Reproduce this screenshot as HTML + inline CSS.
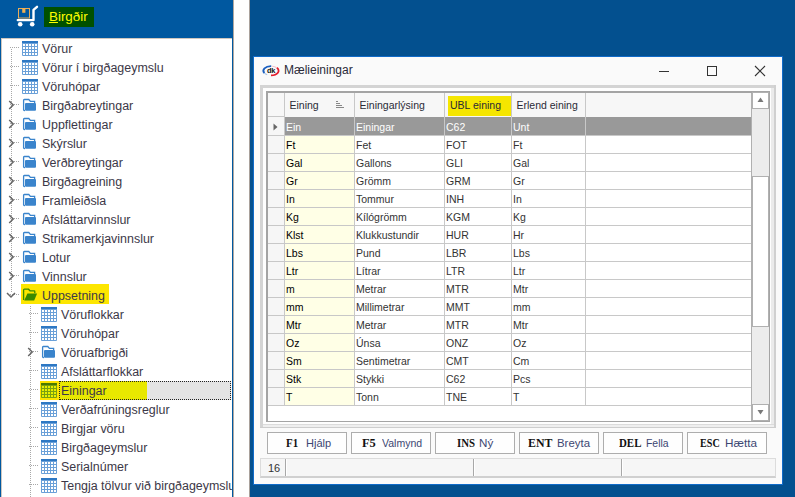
<!DOCTYPE html>
<html><head><meta charset="utf-8"><style>
*{margin:0;padding:0;box-sizing:border-box}
html,body{width:795px;height:497px;overflow:hidden;background:#03508f;font-family:"Liberation Sans",sans-serif;position:relative}
.a{position:absolute}
.t{position:absolute;white-space:nowrap}
.dv{position:absolute;width:1px;background:repeating-linear-gradient(to bottom,#a8a8a8 0 1px,transparent 1px 2px)}
.dh{position:absolute;height:1px;background:repeating-linear-gradient(to right,#a8a8a8 0 1px,transparent 1px 2px)}
</style></head><body>
<div class="a" style="left:0;top:0;width:234px;height:497px;background:#0058a0"></div>
<svg class="a" style="left:0;top:0" width="44" height="32" viewBox="0 0 44 32">
<rect x="18.5" y="8.5" width="11" height="9.5" fill="none" stroke="#e8ac58" stroke-width="1"/>
<rect x="22.2" y="8.2" width="3.2" height="4.6" fill="#f0b050"/>
<path d="M17.8 20.1 H33.5 V9.8 L37 6.8" fill="none" stroke="#fff" stroke-width="2.4" stroke-linejoin="round" stroke-linecap="round"/>
<circle cx="20.2" cy="24.2" r="2.3" fill="#fff"/>
<circle cx="32.2" cy="24.2" r="2.3" fill="#fff"/>
</svg>
<div class="a" style="left:44px;top:7px;width:50px;height:20px;background:#005000"></div>
<div class="t" style="left:49px;top:7px;height:20px;line-height:20px;font-size:13.4px;color:#ffff00"><u style="text-underline-offset:1px">B</u>irgðir</div>
<div class="a" style="left:1px;top:38px;width:231px;height:459px;background:#fff;border-left:1px solid #cfc7bf;border-top:1px solid #cfc7bf"></div>
<div class="a" style="left:233px;top:0;width:17px;height:497px;background:#fefefe;border-left:1px solid #b0a8a0;border-right:1px solid #a8a09a"></div>
<div class="a" style="left:0;top:0;width:232px;height:497px;overflow:hidden">
<div class="dv" style="left:11px;top:49px;height:243px"></div>
<div class="dv" style="left:30px;top:306px;height:191px"></div>
<div class="dh" style="left:10px;top:47px;width:10px"></div>
<svg class="a" style="left:22px;top:41px" width="16" height="15" viewBox="0 0 16 15"><rect x="0" y="0" width="16" height="15" rx="1" fill="#6aa0d8"/><rect x="0" y="0" width="16" height="2" fill="#2d78c4"/><rect x="1" y="3" width="2" height="2" fill="#ffffff"/><rect x="1" y="6" width="2" height="2" fill="#ffffff"/><rect x="1" y="9" width="2" height="2" fill="#ffffff"/><rect x="1" y="12" width="2" height="2" fill="#ffffff"/><rect x="4" y="3" width="2" height="2" fill="#ffffff"/><rect x="4" y="6" width="2" height="2" fill="#ffffff"/><rect x="4" y="9" width="2" height="2" fill="#ffffff"/><rect x="4" y="12" width="2" height="2" fill="#ffffff"/><rect x="7" y="3" width="2" height="2" fill="#ffffff"/><rect x="7" y="6" width="2" height="2" fill="#ffffff"/><rect x="7" y="9" width="2" height="2" fill="#ffffff"/><rect x="7" y="12" width="2" height="2" fill="#ffffff"/><rect x="10" y="3" width="2" height="2" fill="#ffffff"/><rect x="10" y="6" width="2" height="2" fill="#ffffff"/><rect x="10" y="9" width="2" height="2" fill="#ffffff"/><rect x="10" y="12" width="2" height="2" fill="#ffffff"/><rect x="13" y="3" width="2" height="2" fill="#ffffff"/><rect x="13" y="6" width="2" height="2" fill="#ffffff"/><rect x="13" y="9" width="2" height="2" fill="#ffffff"/><rect x="13" y="12" width="2" height="2" fill="#ffffff"/></svg>
<div class="t" style="left:42px;top:38px;height:19px;line-height:22px;font-size:12.45px;color:#3c3848">Vörur</div>
<div class="dh" style="left:10px;top:66px;width:10px"></div>
<svg class="a" style="left:22px;top:60px" width="16" height="15" viewBox="0 0 16 15"><rect x="0" y="0" width="16" height="15" rx="1" fill="#6aa0d8"/><rect x="0" y="0" width="16" height="2" fill="#2d78c4"/><rect x="1" y="3" width="2" height="2" fill="#ffffff"/><rect x="1" y="6" width="2" height="2" fill="#ffffff"/><rect x="1" y="9" width="2" height="2" fill="#ffffff"/><rect x="1" y="12" width="2" height="2" fill="#ffffff"/><rect x="4" y="3" width="2" height="2" fill="#ffffff"/><rect x="4" y="6" width="2" height="2" fill="#ffffff"/><rect x="4" y="9" width="2" height="2" fill="#ffffff"/><rect x="4" y="12" width="2" height="2" fill="#ffffff"/><rect x="7" y="3" width="2" height="2" fill="#ffffff"/><rect x="7" y="6" width="2" height="2" fill="#ffffff"/><rect x="7" y="9" width="2" height="2" fill="#ffffff"/><rect x="7" y="12" width="2" height="2" fill="#ffffff"/><rect x="10" y="3" width="2" height="2" fill="#ffffff"/><rect x="10" y="6" width="2" height="2" fill="#ffffff"/><rect x="10" y="9" width="2" height="2" fill="#ffffff"/><rect x="10" y="12" width="2" height="2" fill="#ffffff"/><rect x="13" y="3" width="2" height="2" fill="#ffffff"/><rect x="13" y="6" width="2" height="2" fill="#ffffff"/><rect x="13" y="9" width="2" height="2" fill="#ffffff"/><rect x="13" y="12" width="2" height="2" fill="#ffffff"/></svg>
<div class="t" style="left:42px;top:57px;height:19px;line-height:22px;font-size:12.45px;color:#3c3848">Vörur í birgðageymslu</div>
<div class="dh" style="left:10px;top:85px;width:10px"></div>
<svg class="a" style="left:22px;top:79px" width="16" height="15" viewBox="0 0 16 15"><rect x="0" y="0" width="16" height="15" rx="1" fill="#6aa0d8"/><rect x="0" y="0" width="16" height="2" fill="#2d78c4"/><rect x="1" y="3" width="2" height="2" fill="#ffffff"/><rect x="1" y="6" width="2" height="2" fill="#ffffff"/><rect x="1" y="9" width="2" height="2" fill="#ffffff"/><rect x="1" y="12" width="2" height="2" fill="#ffffff"/><rect x="4" y="3" width="2" height="2" fill="#ffffff"/><rect x="4" y="6" width="2" height="2" fill="#ffffff"/><rect x="4" y="9" width="2" height="2" fill="#ffffff"/><rect x="4" y="12" width="2" height="2" fill="#ffffff"/><rect x="7" y="3" width="2" height="2" fill="#ffffff"/><rect x="7" y="6" width="2" height="2" fill="#ffffff"/><rect x="7" y="9" width="2" height="2" fill="#ffffff"/><rect x="7" y="12" width="2" height="2" fill="#ffffff"/><rect x="10" y="3" width="2" height="2" fill="#ffffff"/><rect x="10" y="6" width="2" height="2" fill="#ffffff"/><rect x="10" y="9" width="2" height="2" fill="#ffffff"/><rect x="10" y="12" width="2" height="2" fill="#ffffff"/><rect x="13" y="3" width="2" height="2" fill="#ffffff"/><rect x="13" y="6" width="2" height="2" fill="#ffffff"/><rect x="13" y="9" width="2" height="2" fill="#ffffff"/><rect x="13" y="12" width="2" height="2" fill="#ffffff"/></svg>
<div class="t" style="left:42px;top:76px;height:19px;line-height:22px;font-size:12.45px;color:#3c3848">Vöruhópar</div>
<div class="dh" style="left:10px;top:104px;width:10px"></div>
<svg class="a" style="left:22px;top:98px" width="16" height="14" viewBox="0 0 16 14"><path d="M1.6 12 V2.2 Q1.6 1.5 2.3 1.5 H6.8 L8.4 3.4 H12.6 V5.5" fill="none" stroke="#3a84cc" stroke-width="1.3"/><rect x="3" y="5" width="11" height="7.7" rx="1" fill="#3a84cc"/><path d="M1.6 11.5 Q1.6 12.7 3 12.7" fill="none" stroke="#3a84cc" stroke-width="1.3"/></svg>
<svg class="a" style="left:8px;top:100px" width="7" height="10" viewBox="0 0 7 10"><path d="M1.2 1 L5.2 5 L1.2 9" fill="none" stroke="#666" stroke-width="1.5"/></svg>
<div class="t" style="left:42px;top:95px;height:19px;line-height:22px;font-size:12.45px;color:#3c3848">Birgðabreytingar</div>
<div class="dh" style="left:10px;top:123px;width:10px"></div>
<svg class="a" style="left:22px;top:117px" width="16" height="14" viewBox="0 0 16 14"><path d="M1.6 12 V2.2 Q1.6 1.5 2.3 1.5 H6.8 L8.4 3.4 H12.6 V5.5" fill="none" stroke="#3a84cc" stroke-width="1.3"/><rect x="3" y="5" width="11" height="7.7" rx="1" fill="#3a84cc"/><path d="M1.6 11.5 Q1.6 12.7 3 12.7" fill="none" stroke="#3a84cc" stroke-width="1.3"/></svg>
<svg class="a" style="left:8px;top:119px" width="7" height="10" viewBox="0 0 7 10"><path d="M1.2 1 L5.2 5 L1.2 9" fill="none" stroke="#666" stroke-width="1.5"/></svg>
<div class="t" style="left:42px;top:114px;height:19px;line-height:22px;font-size:12.45px;color:#3c3848">Uppflettingar</div>
<div class="dh" style="left:10px;top:142px;width:10px"></div>
<svg class="a" style="left:22px;top:136px" width="16" height="14" viewBox="0 0 16 14"><path d="M1.6 12 V2.2 Q1.6 1.5 2.3 1.5 H6.8 L8.4 3.4 H12.6 V5.5" fill="none" stroke="#3a84cc" stroke-width="1.3"/><rect x="3" y="5" width="11" height="7.7" rx="1" fill="#3a84cc"/><path d="M1.6 11.5 Q1.6 12.7 3 12.7" fill="none" stroke="#3a84cc" stroke-width="1.3"/></svg>
<svg class="a" style="left:8px;top:138px" width="7" height="10" viewBox="0 0 7 10"><path d="M1.2 1 L5.2 5 L1.2 9" fill="none" stroke="#666" stroke-width="1.5"/></svg>
<div class="t" style="left:42px;top:133px;height:19px;line-height:22px;font-size:12.45px;color:#3c3848">Skýrslur</div>
<div class="dh" style="left:10px;top:161px;width:10px"></div>
<svg class="a" style="left:22px;top:155px" width="16" height="14" viewBox="0 0 16 14"><path d="M1.6 12 V2.2 Q1.6 1.5 2.3 1.5 H6.8 L8.4 3.4 H12.6 V5.5" fill="none" stroke="#3a84cc" stroke-width="1.3"/><rect x="3" y="5" width="11" height="7.7" rx="1" fill="#3a84cc"/><path d="M1.6 11.5 Q1.6 12.7 3 12.7" fill="none" stroke="#3a84cc" stroke-width="1.3"/></svg>
<svg class="a" style="left:8px;top:157px" width="7" height="10" viewBox="0 0 7 10"><path d="M1.2 1 L5.2 5 L1.2 9" fill="none" stroke="#666" stroke-width="1.5"/></svg>
<div class="t" style="left:42px;top:152px;height:19px;line-height:22px;font-size:12.45px;color:#3c3848">Verðbreytingar</div>
<div class="dh" style="left:10px;top:180px;width:10px"></div>
<svg class="a" style="left:22px;top:174px" width="16" height="14" viewBox="0 0 16 14"><path d="M1.6 12 V2.2 Q1.6 1.5 2.3 1.5 H6.8 L8.4 3.4 H12.6 V5.5" fill="none" stroke="#3a84cc" stroke-width="1.3"/><rect x="3" y="5" width="11" height="7.7" rx="1" fill="#3a84cc"/><path d="M1.6 11.5 Q1.6 12.7 3 12.7" fill="none" stroke="#3a84cc" stroke-width="1.3"/></svg>
<svg class="a" style="left:8px;top:176px" width="7" height="10" viewBox="0 0 7 10"><path d="M1.2 1 L5.2 5 L1.2 9" fill="none" stroke="#666" stroke-width="1.5"/></svg>
<div class="t" style="left:42px;top:171px;height:19px;line-height:22px;font-size:12.45px;color:#3c3848">Birgðagreining</div>
<div class="dh" style="left:10px;top:199px;width:10px"></div>
<svg class="a" style="left:22px;top:193px" width="16" height="14" viewBox="0 0 16 14"><path d="M1.6 12 V2.2 Q1.6 1.5 2.3 1.5 H6.8 L8.4 3.4 H12.6 V5.5" fill="none" stroke="#3a84cc" stroke-width="1.3"/><rect x="3" y="5" width="11" height="7.7" rx="1" fill="#3a84cc"/><path d="M1.6 11.5 Q1.6 12.7 3 12.7" fill="none" stroke="#3a84cc" stroke-width="1.3"/></svg>
<svg class="a" style="left:8px;top:195px" width="7" height="10" viewBox="0 0 7 10"><path d="M1.2 1 L5.2 5 L1.2 9" fill="none" stroke="#666" stroke-width="1.5"/></svg>
<div class="t" style="left:42px;top:190px;height:19px;line-height:22px;font-size:12.45px;color:#3c3848">Framleiðsla</div>
<div class="dh" style="left:10px;top:218px;width:10px"></div>
<svg class="a" style="left:22px;top:212px" width="16" height="14" viewBox="0 0 16 14"><path d="M1.6 12 V2.2 Q1.6 1.5 2.3 1.5 H6.8 L8.4 3.4 H12.6 V5.5" fill="none" stroke="#3a84cc" stroke-width="1.3"/><rect x="3" y="5" width="11" height="7.7" rx="1" fill="#3a84cc"/><path d="M1.6 11.5 Q1.6 12.7 3 12.7" fill="none" stroke="#3a84cc" stroke-width="1.3"/></svg>
<svg class="a" style="left:8px;top:214px" width="7" height="10" viewBox="0 0 7 10"><path d="M1.2 1 L5.2 5 L1.2 9" fill="none" stroke="#666" stroke-width="1.5"/></svg>
<div class="t" style="left:42px;top:209px;height:19px;line-height:22px;font-size:12.45px;color:#3c3848">Afsláttarvinnslur</div>
<div class="dh" style="left:10px;top:237px;width:10px"></div>
<svg class="a" style="left:22px;top:231px" width="16" height="14" viewBox="0 0 16 14"><path d="M1.6 12 V2.2 Q1.6 1.5 2.3 1.5 H6.8 L8.4 3.4 H12.6 V5.5" fill="none" stroke="#3a84cc" stroke-width="1.3"/><rect x="3" y="5" width="11" height="7.7" rx="1" fill="#3a84cc"/><path d="M1.6 11.5 Q1.6 12.7 3 12.7" fill="none" stroke="#3a84cc" stroke-width="1.3"/></svg>
<svg class="a" style="left:8px;top:233px" width="7" height="10" viewBox="0 0 7 10"><path d="M1.2 1 L5.2 5 L1.2 9" fill="none" stroke="#666" stroke-width="1.5"/></svg>
<div class="t" style="left:42px;top:228px;height:19px;line-height:22px;font-size:12.45px;color:#3c3848">Strikamerkjavinnslur</div>
<div class="dh" style="left:10px;top:256px;width:10px"></div>
<svg class="a" style="left:22px;top:250px" width="16" height="14" viewBox="0 0 16 14"><path d="M1.6 12 V2.2 Q1.6 1.5 2.3 1.5 H6.8 L8.4 3.4 H12.6 V5.5" fill="none" stroke="#3a84cc" stroke-width="1.3"/><rect x="3" y="5" width="11" height="7.7" rx="1" fill="#3a84cc"/><path d="M1.6 11.5 Q1.6 12.7 3 12.7" fill="none" stroke="#3a84cc" stroke-width="1.3"/></svg>
<svg class="a" style="left:8px;top:252px" width="7" height="10" viewBox="0 0 7 10"><path d="M1.2 1 L5.2 5 L1.2 9" fill="none" stroke="#666" stroke-width="1.5"/></svg>
<div class="t" style="left:42px;top:247px;height:19px;line-height:22px;font-size:12.45px;color:#3c3848">Lotur</div>
<div class="dh" style="left:10px;top:275px;width:10px"></div>
<svg class="a" style="left:22px;top:269px" width="16" height="14" viewBox="0 0 16 14"><path d="M1.6 12 V2.2 Q1.6 1.5 2.3 1.5 H6.8 L8.4 3.4 H12.6 V5.5" fill="none" stroke="#3a84cc" stroke-width="1.3"/><rect x="3" y="5" width="11" height="7.7" rx="1" fill="#3a84cc"/><path d="M1.6 11.5 Q1.6 12.7 3 12.7" fill="none" stroke="#3a84cc" stroke-width="1.3"/></svg>
<svg class="a" style="left:8px;top:271px" width="7" height="10" viewBox="0 0 7 10"><path d="M1.2 1 L5.2 5 L1.2 9" fill="none" stroke="#666" stroke-width="1.5"/></svg>
<div class="t" style="left:42px;top:266px;height:19px;line-height:22px;font-size:12.45px;color:#3c3848">Vinnslur</div>
<div class="a" style="left:21px;top:284px;width:88px;height:20px;background:#fde600"></div>
<div class="dh" style="left:10px;top:294px;width:10px"></div>
<svg class="a" style="left:22px;top:288px" width="16" height="14" viewBox="0 0 16 14"><path d="M1.6 12 V2 Q1.6 1.2 2.4 1.2 H6.5 L8 2.8 H12.2 Q12.8 2.8 12.8 3.4 V5.2" fill="none" stroke="#3a8a00" stroke-width="1.3"/><path d="M5.4 5.5 H15.1 L12.2 12.4 H2.2 Z" fill="#3a8a00"/></svg>
<svg class="a" style="left:6px;top:292px" width="10" height="7" viewBox="0 0 10 7"><path d="M1 1 L5 5 L9 1" fill="none" stroke="#666" stroke-width="1.5"/></svg>
<div class="t" style="left:42px;top:285px;height:19px;line-height:22px;font-size:12.45px;color:#3c3848">Uppsetning</div>
<div class="dh" style="left:29px;top:313px;width:10px"></div>
<svg class="a" style="left:41px;top:307px" width="16" height="15" viewBox="0 0 16 15"><rect x="0" y="0" width="16" height="15" rx="1" fill="#6aa0d8"/><rect x="0" y="0" width="16" height="2" fill="#2d78c4"/><rect x="1" y="3" width="2" height="2" fill="#ffffff"/><rect x="1" y="6" width="2" height="2" fill="#ffffff"/><rect x="1" y="9" width="2" height="2" fill="#ffffff"/><rect x="1" y="12" width="2" height="2" fill="#ffffff"/><rect x="4" y="3" width="2" height="2" fill="#ffffff"/><rect x="4" y="6" width="2" height="2" fill="#ffffff"/><rect x="4" y="9" width="2" height="2" fill="#ffffff"/><rect x="4" y="12" width="2" height="2" fill="#ffffff"/><rect x="7" y="3" width="2" height="2" fill="#ffffff"/><rect x="7" y="6" width="2" height="2" fill="#ffffff"/><rect x="7" y="9" width="2" height="2" fill="#ffffff"/><rect x="7" y="12" width="2" height="2" fill="#ffffff"/><rect x="10" y="3" width="2" height="2" fill="#ffffff"/><rect x="10" y="6" width="2" height="2" fill="#ffffff"/><rect x="10" y="9" width="2" height="2" fill="#ffffff"/><rect x="10" y="12" width="2" height="2" fill="#ffffff"/><rect x="13" y="3" width="2" height="2" fill="#ffffff"/><rect x="13" y="6" width="2" height="2" fill="#ffffff"/><rect x="13" y="9" width="2" height="2" fill="#ffffff"/><rect x="13" y="12" width="2" height="2" fill="#ffffff"/></svg>
<div class="t" style="left:61px;top:304px;height:19px;line-height:22px;font-size:12.45px;color:#3c3848">Vöruflokkar</div>
<div class="dh" style="left:29px;top:332px;width:10px"></div>
<svg class="a" style="left:41px;top:326px" width="16" height="15" viewBox="0 0 16 15"><rect x="0" y="0" width="16" height="15" rx="1" fill="#6aa0d8"/><rect x="0" y="0" width="16" height="2" fill="#2d78c4"/><rect x="1" y="3" width="2" height="2" fill="#ffffff"/><rect x="1" y="6" width="2" height="2" fill="#ffffff"/><rect x="1" y="9" width="2" height="2" fill="#ffffff"/><rect x="1" y="12" width="2" height="2" fill="#ffffff"/><rect x="4" y="3" width="2" height="2" fill="#ffffff"/><rect x="4" y="6" width="2" height="2" fill="#ffffff"/><rect x="4" y="9" width="2" height="2" fill="#ffffff"/><rect x="4" y="12" width="2" height="2" fill="#ffffff"/><rect x="7" y="3" width="2" height="2" fill="#ffffff"/><rect x="7" y="6" width="2" height="2" fill="#ffffff"/><rect x="7" y="9" width="2" height="2" fill="#ffffff"/><rect x="7" y="12" width="2" height="2" fill="#ffffff"/><rect x="10" y="3" width="2" height="2" fill="#ffffff"/><rect x="10" y="6" width="2" height="2" fill="#ffffff"/><rect x="10" y="9" width="2" height="2" fill="#ffffff"/><rect x="10" y="12" width="2" height="2" fill="#ffffff"/><rect x="13" y="3" width="2" height="2" fill="#ffffff"/><rect x="13" y="6" width="2" height="2" fill="#ffffff"/><rect x="13" y="9" width="2" height="2" fill="#ffffff"/><rect x="13" y="12" width="2" height="2" fill="#ffffff"/></svg>
<div class="t" style="left:61px;top:323px;height:19px;line-height:22px;font-size:12.45px;color:#3c3848">Vöruhópar</div>
<div class="dh" style="left:29px;top:351px;width:10px"></div>
<svg class="a" style="left:41px;top:345px" width="16" height="14" viewBox="0 0 16 14"><path d="M1.6 12 V2.2 Q1.6 1.5 2.3 1.5 H6.8 L8.4 3.4 H12.6 V5.5" fill="none" stroke="#3a84cc" stroke-width="1.3"/><rect x="3" y="5" width="11" height="7.7" rx="1" fill="#3a84cc"/><path d="M1.6 11.5 Q1.6 12.7 3 12.7" fill="none" stroke="#3a84cc" stroke-width="1.3"/></svg>
<svg class="a" style="left:27px;top:347px" width="7" height="10" viewBox="0 0 7 10"><path d="M1.2 1 L5.2 5 L1.2 9" fill="none" stroke="#666" stroke-width="1.5"/></svg>
<div class="t" style="left:61px;top:342px;height:19px;line-height:22px;font-size:12.45px;color:#3c3848">Vöruafbrigði</div>
<div class="dh" style="left:29px;top:370px;width:10px"></div>
<svg class="a" style="left:41px;top:364px" width="16" height="15" viewBox="0 0 16 15"><rect x="0" y="0" width="16" height="15" rx="1" fill="#6aa0d8"/><rect x="0" y="0" width="16" height="2" fill="#2d78c4"/><rect x="1" y="3" width="2" height="2" fill="#ffffff"/><rect x="1" y="6" width="2" height="2" fill="#ffffff"/><rect x="1" y="9" width="2" height="2" fill="#ffffff"/><rect x="1" y="12" width="2" height="2" fill="#ffffff"/><rect x="4" y="3" width="2" height="2" fill="#ffffff"/><rect x="4" y="6" width="2" height="2" fill="#ffffff"/><rect x="4" y="9" width="2" height="2" fill="#ffffff"/><rect x="4" y="12" width="2" height="2" fill="#ffffff"/><rect x="7" y="3" width="2" height="2" fill="#ffffff"/><rect x="7" y="6" width="2" height="2" fill="#ffffff"/><rect x="7" y="9" width="2" height="2" fill="#ffffff"/><rect x="7" y="12" width="2" height="2" fill="#ffffff"/><rect x="10" y="3" width="2" height="2" fill="#ffffff"/><rect x="10" y="6" width="2" height="2" fill="#ffffff"/><rect x="10" y="9" width="2" height="2" fill="#ffffff"/><rect x="10" y="12" width="2" height="2" fill="#ffffff"/><rect x="13" y="3" width="2" height="2" fill="#ffffff"/><rect x="13" y="6" width="2" height="2" fill="#ffffff"/><rect x="13" y="9" width="2" height="2" fill="#ffffff"/><rect x="13" y="12" width="2" height="2" fill="#ffffff"/></svg>
<div class="t" style="left:61px;top:361px;height:19px;line-height:22px;font-size:12.45px;color:#3c3848">Afsláttarflokkar</div>
<div class="a" style="left:59px;top:381px;width:172px;height:19px;background:#e4e4e4"></div>
<div class="a" style="left:40px;top:381px;width:107px;height:19px;background:#e8e800"></div>
<div class="a" style="left:40px;top:381px;width:19px;height:19px;background:#fee400"></div>
<div class="a" style="left:59px;top:381px;width:172px;height:19px;border:1px dotted #222"></div>
<div class="dh" style="left:29px;top:389px;width:10px"></div>
<svg class="a" style="left:41px;top:383px" width="16" height="15" viewBox="0 0 16 15"><rect x="0" y="0" width="16" height="15" rx="1" fill="#7aa010"/><rect x="0" y="0" width="16" height="2" fill="#4a7a00"/><rect x="1" y="3" width="2" height="2" fill="#e8f000"/><rect x="1" y="6" width="2" height="2" fill="#e8f000"/><rect x="1" y="9" width="2" height="2" fill="#e8f000"/><rect x="1" y="12" width="2" height="2" fill="#e8f000"/><rect x="4" y="3" width="2" height="2" fill="#e8f000"/><rect x="4" y="6" width="2" height="2" fill="#e8f000"/><rect x="4" y="9" width="2" height="2" fill="#e8f000"/><rect x="4" y="12" width="2" height="2" fill="#e8f000"/><rect x="7" y="3" width="2" height="2" fill="#e8f000"/><rect x="7" y="6" width="2" height="2" fill="#e8f000"/><rect x="7" y="9" width="2" height="2" fill="#e8f000"/><rect x="7" y="12" width="2" height="2" fill="#e8f000"/><rect x="10" y="3" width="2" height="2" fill="#e8f000"/><rect x="10" y="6" width="2" height="2" fill="#e8f000"/><rect x="10" y="9" width="2" height="2" fill="#e8f000"/><rect x="10" y="12" width="2" height="2" fill="#e8f000"/><rect x="13" y="3" width="2" height="2" fill="#e8f000"/><rect x="13" y="6" width="2" height="2" fill="#e8f000"/><rect x="13" y="9" width="2" height="2" fill="#e8f000"/><rect x="13" y="12" width="2" height="2" fill="#e8f000"/></svg>
<div class="t" style="left:61px;top:380px;height:19px;line-height:22px;font-size:12.45px;color:#3c3848">Einingar</div>
<div class="dh" style="left:29px;top:408px;width:10px"></div>
<svg class="a" style="left:41px;top:402px" width="16" height="15" viewBox="0 0 16 15"><rect x="0" y="0" width="16" height="15" rx="1" fill="#6aa0d8"/><rect x="0" y="0" width="16" height="2" fill="#2d78c4"/><rect x="1" y="3" width="2" height="2" fill="#ffffff"/><rect x="1" y="6" width="2" height="2" fill="#ffffff"/><rect x="1" y="9" width="2" height="2" fill="#ffffff"/><rect x="1" y="12" width="2" height="2" fill="#ffffff"/><rect x="4" y="3" width="2" height="2" fill="#ffffff"/><rect x="4" y="6" width="2" height="2" fill="#ffffff"/><rect x="4" y="9" width="2" height="2" fill="#ffffff"/><rect x="4" y="12" width="2" height="2" fill="#ffffff"/><rect x="7" y="3" width="2" height="2" fill="#ffffff"/><rect x="7" y="6" width="2" height="2" fill="#ffffff"/><rect x="7" y="9" width="2" height="2" fill="#ffffff"/><rect x="7" y="12" width="2" height="2" fill="#ffffff"/><rect x="10" y="3" width="2" height="2" fill="#ffffff"/><rect x="10" y="6" width="2" height="2" fill="#ffffff"/><rect x="10" y="9" width="2" height="2" fill="#ffffff"/><rect x="10" y="12" width="2" height="2" fill="#ffffff"/><rect x="13" y="3" width="2" height="2" fill="#ffffff"/><rect x="13" y="6" width="2" height="2" fill="#ffffff"/><rect x="13" y="9" width="2" height="2" fill="#ffffff"/><rect x="13" y="12" width="2" height="2" fill="#ffffff"/></svg>
<div class="t" style="left:61px;top:399px;height:19px;line-height:22px;font-size:12.45px;color:#3c3848">Verðafrúningsreglur</div>
<div class="dh" style="left:29px;top:427px;width:10px"></div>
<svg class="a" style="left:41px;top:421px" width="16" height="15" viewBox="0 0 16 15"><rect x="0" y="0" width="16" height="15" rx="1" fill="#6aa0d8"/><rect x="0" y="0" width="16" height="2" fill="#2d78c4"/><rect x="1" y="3" width="2" height="2" fill="#ffffff"/><rect x="1" y="6" width="2" height="2" fill="#ffffff"/><rect x="1" y="9" width="2" height="2" fill="#ffffff"/><rect x="1" y="12" width="2" height="2" fill="#ffffff"/><rect x="4" y="3" width="2" height="2" fill="#ffffff"/><rect x="4" y="6" width="2" height="2" fill="#ffffff"/><rect x="4" y="9" width="2" height="2" fill="#ffffff"/><rect x="4" y="12" width="2" height="2" fill="#ffffff"/><rect x="7" y="3" width="2" height="2" fill="#ffffff"/><rect x="7" y="6" width="2" height="2" fill="#ffffff"/><rect x="7" y="9" width="2" height="2" fill="#ffffff"/><rect x="7" y="12" width="2" height="2" fill="#ffffff"/><rect x="10" y="3" width="2" height="2" fill="#ffffff"/><rect x="10" y="6" width="2" height="2" fill="#ffffff"/><rect x="10" y="9" width="2" height="2" fill="#ffffff"/><rect x="10" y="12" width="2" height="2" fill="#ffffff"/><rect x="13" y="3" width="2" height="2" fill="#ffffff"/><rect x="13" y="6" width="2" height="2" fill="#ffffff"/><rect x="13" y="9" width="2" height="2" fill="#ffffff"/><rect x="13" y="12" width="2" height="2" fill="#ffffff"/></svg>
<div class="t" style="left:61px;top:418px;height:19px;line-height:22px;font-size:12.45px;color:#3c3848">Birgjar vöru</div>
<div class="dh" style="left:29px;top:446px;width:10px"></div>
<svg class="a" style="left:41px;top:440px" width="16" height="15" viewBox="0 0 16 15"><rect x="0" y="0" width="16" height="15" rx="1" fill="#6aa0d8"/><rect x="0" y="0" width="16" height="2" fill="#2d78c4"/><rect x="1" y="3" width="2" height="2" fill="#ffffff"/><rect x="1" y="6" width="2" height="2" fill="#ffffff"/><rect x="1" y="9" width="2" height="2" fill="#ffffff"/><rect x="1" y="12" width="2" height="2" fill="#ffffff"/><rect x="4" y="3" width="2" height="2" fill="#ffffff"/><rect x="4" y="6" width="2" height="2" fill="#ffffff"/><rect x="4" y="9" width="2" height="2" fill="#ffffff"/><rect x="4" y="12" width="2" height="2" fill="#ffffff"/><rect x="7" y="3" width="2" height="2" fill="#ffffff"/><rect x="7" y="6" width="2" height="2" fill="#ffffff"/><rect x="7" y="9" width="2" height="2" fill="#ffffff"/><rect x="7" y="12" width="2" height="2" fill="#ffffff"/><rect x="10" y="3" width="2" height="2" fill="#ffffff"/><rect x="10" y="6" width="2" height="2" fill="#ffffff"/><rect x="10" y="9" width="2" height="2" fill="#ffffff"/><rect x="10" y="12" width="2" height="2" fill="#ffffff"/><rect x="13" y="3" width="2" height="2" fill="#ffffff"/><rect x="13" y="6" width="2" height="2" fill="#ffffff"/><rect x="13" y="9" width="2" height="2" fill="#ffffff"/><rect x="13" y="12" width="2" height="2" fill="#ffffff"/></svg>
<div class="t" style="left:61px;top:437px;height:19px;line-height:22px;font-size:12.45px;color:#3c3848">Birgðageymslur</div>
<div class="dh" style="left:29px;top:465px;width:10px"></div>
<svg class="a" style="left:41px;top:459px" width="16" height="15" viewBox="0 0 16 15"><rect x="0" y="0" width="16" height="15" rx="1" fill="#6aa0d8"/><rect x="0" y="0" width="16" height="2" fill="#2d78c4"/><rect x="1" y="3" width="2" height="2" fill="#ffffff"/><rect x="1" y="6" width="2" height="2" fill="#ffffff"/><rect x="1" y="9" width="2" height="2" fill="#ffffff"/><rect x="1" y="12" width="2" height="2" fill="#ffffff"/><rect x="4" y="3" width="2" height="2" fill="#ffffff"/><rect x="4" y="6" width="2" height="2" fill="#ffffff"/><rect x="4" y="9" width="2" height="2" fill="#ffffff"/><rect x="4" y="12" width="2" height="2" fill="#ffffff"/><rect x="7" y="3" width="2" height="2" fill="#ffffff"/><rect x="7" y="6" width="2" height="2" fill="#ffffff"/><rect x="7" y="9" width="2" height="2" fill="#ffffff"/><rect x="7" y="12" width="2" height="2" fill="#ffffff"/><rect x="10" y="3" width="2" height="2" fill="#ffffff"/><rect x="10" y="6" width="2" height="2" fill="#ffffff"/><rect x="10" y="9" width="2" height="2" fill="#ffffff"/><rect x="10" y="12" width="2" height="2" fill="#ffffff"/><rect x="13" y="3" width="2" height="2" fill="#ffffff"/><rect x="13" y="6" width="2" height="2" fill="#ffffff"/><rect x="13" y="9" width="2" height="2" fill="#ffffff"/><rect x="13" y="12" width="2" height="2" fill="#ffffff"/></svg>
<div class="t" style="left:61px;top:456px;height:19px;line-height:22px;font-size:12.45px;color:#3c3848">Serialnúmer</div>
<div class="dh" style="left:29px;top:484px;width:10px"></div>
<svg class="a" style="left:41px;top:478px" width="16" height="15" viewBox="0 0 16 15"><rect x="0" y="0" width="16" height="15" rx="1" fill="#6aa0d8"/><rect x="0" y="0" width="16" height="2" fill="#2d78c4"/><rect x="1" y="3" width="2" height="2" fill="#ffffff"/><rect x="1" y="6" width="2" height="2" fill="#ffffff"/><rect x="1" y="9" width="2" height="2" fill="#ffffff"/><rect x="1" y="12" width="2" height="2" fill="#ffffff"/><rect x="4" y="3" width="2" height="2" fill="#ffffff"/><rect x="4" y="6" width="2" height="2" fill="#ffffff"/><rect x="4" y="9" width="2" height="2" fill="#ffffff"/><rect x="4" y="12" width="2" height="2" fill="#ffffff"/><rect x="7" y="3" width="2" height="2" fill="#ffffff"/><rect x="7" y="6" width="2" height="2" fill="#ffffff"/><rect x="7" y="9" width="2" height="2" fill="#ffffff"/><rect x="7" y="12" width="2" height="2" fill="#ffffff"/><rect x="10" y="3" width="2" height="2" fill="#ffffff"/><rect x="10" y="6" width="2" height="2" fill="#ffffff"/><rect x="10" y="9" width="2" height="2" fill="#ffffff"/><rect x="10" y="12" width="2" height="2" fill="#ffffff"/><rect x="13" y="3" width="2" height="2" fill="#ffffff"/><rect x="13" y="6" width="2" height="2" fill="#ffffff"/><rect x="13" y="9" width="2" height="2" fill="#ffffff"/><rect x="13" y="12" width="2" height="2" fill="#ffffff"/></svg>
<div class="t" style="left:61px;top:475px;height:19px;line-height:22px;font-size:12.45px;color:#3c3848">Tengja tölvur við birgðageymslu</div>
</div>
<div class="a" style="left:253px;top:56px;width:530px;height:429px;background:#fafafa;border:1px solid #0f6ac8"></div>
<svg class="a" style="left:259px;top:62px" width="24" height="18" viewBox="0 0 24 18">
<path d="M12.2 4.2 A7.6 4.6 0 0 0 5.42 11.1" fill="none" stroke="#1a5fc0" stroke-width="1.8"/>
<path d="M5.42 11.1 A7.6 4.6 0 0 0 8.2 12.78" fill="none" stroke="#a8c4e8" stroke-width="1.1"/>
<path d="M17.82 5.84 A7.6 4.6 0 0 1 12 13.4" fill="none" stroke="#e41c2c" stroke-width="1.8"/>
<path d="M13.2 4.25 A7.6 4.6 0 0 1 17.82 5.84" fill="none" stroke="#f6c4ca" stroke-width="1.1"/>
<text x="12" y="11.3" font-family="Liberation Sans" font-size="7.4" font-weight="700" text-anchor="middle" fill="#111" letter-spacing="-0.3">dk</text>
</svg>
<div class="t" style="left:284px;top:62px;font-size:12px;line-height:16px;color:#2a2a38">Mælieiningar</div>
<div class="a" style="left:659px;top:71px;width:10px;height:1px;background:#333"></div>
<div class="a" style="left:707px;top:66px;width:10px;height:10px;border:1px solid #333"></div>
<svg class="a" style="left:754px;top:65px" width="12" height="12" viewBox="0 0 12 12">
<path d="M1 1 L11 11 M11 1 L1 11" stroke="#333" stroke-width="1.1"/></svg>
<div class="a" style="left:260px;top:85px;width:516px;height:343px;background:#fefefe"></div>
<div class="a" style="left:260px;top:85px;width:516px;height:3px;background:#d4d4d4"></div>
<div class="a" style="left:260px;top:85px;width:3px;height:343px;background:#d4d4d4"></div>
<div class="a" style="left:771px;top:88px;width:3px;height:339px;background:#ebebeb"></div>
<div class="a" style="left:774px;top:85px;width:2px;height:343px;background:#d0d0d0"></div>
<div class="a" style="left:263px;top:424px;width:511px;height:1px;background:#dcdcdc"></div>
<div class="a" style="left:263px;top:425px;width:511px;height:2px;background:#efefef"></div>
<div class="a" style="left:260px;top:427px;width:516px;height:1px;background:#cdcdcd"></div>
<div class="a" style="left:266px;top:91px;width:504px;height:331px;border:2px solid #a4a4a4;border-bottom-width:1px;background:#fff"></div>
<div class="a" style="left:268px;top:93px;width:483px;height:24px;background:#f7f7f7"></div>
<div class="a" style="left:268px;top:117px;width:16px;height:288px;background:#f6f6f6"></div>
<div class="a" style="left:285px;top:135px;width:69px;height:270px;background:#ffffe6"></div>
<div class="a" style="left:285px;top:117px;width:466px;height:18px;background:#999"></div>
<div class="a" style="left:284px;top:93px;width:1px;height:312px;background:#c8c8c8"></div>
<div class="a" style="left:354px;top:93px;width:1px;height:312px;background:#c8c8c8"></div>
<div class="a" style="left:444px;top:93px;width:1px;height:312px;background:#c8c8c8"></div>
<div class="a" style="left:511px;top:93px;width:1px;height:312px;background:#c8c8c8"></div>
<div class="a" style="left:585px;top:93px;width:1px;height:312px;background:#c8c8c8"></div>
<div class="a" style="left:268px;top:116px;width:16px;height:1px;background:#c8c8c8"></div>
<div class="a" style="left:268px;top:135px;width:483px;height:1px;background:#c8c8c8"></div>
<div class="a" style="left:268px;top:153px;width:483px;height:1px;background:#c8c8c8"></div>
<div class="a" style="left:268px;top:171px;width:483px;height:1px;background:#c8c8c8"></div>
<div class="a" style="left:268px;top:189px;width:483px;height:1px;background:#c8c8c8"></div>
<div class="a" style="left:268px;top:207px;width:483px;height:1px;background:#c8c8c8"></div>
<div class="a" style="left:268px;top:225px;width:483px;height:1px;background:#c8c8c8"></div>
<div class="a" style="left:268px;top:243px;width:483px;height:1px;background:#c8c8c8"></div>
<div class="a" style="left:268px;top:261px;width:483px;height:1px;background:#c8c8c8"></div>
<div class="a" style="left:268px;top:279px;width:483px;height:1px;background:#c8c8c8"></div>
<div class="a" style="left:268px;top:297px;width:483px;height:1px;background:#c8c8c8"></div>
<div class="a" style="left:268px;top:315px;width:483px;height:1px;background:#c8c8c8"></div>
<div class="a" style="left:268px;top:333px;width:483px;height:1px;background:#c8c8c8"></div>
<div class="a" style="left:268px;top:351px;width:483px;height:1px;background:#c8c8c8"></div>
<div class="a" style="left:268px;top:369px;width:483px;height:1px;background:#c8c8c8"></div>
<div class="a" style="left:268px;top:387px;width:483px;height:1px;background:#c8c8c8"></div>
<div class="a" style="left:268px;top:405px;width:483px;height:1px;background:#c8c8c8"></div>
<div class="a" style="left:448px;top:96px;width:63px;height:20px;background:#f5e600"></div>
<div class="t" style="left:289.5px;top:97px;font-size:10.5px;line-height:16px;color:#2a2a36">Eining</div>
<div class="t" style="left:359.5px;top:97px;font-size:10.5px;line-height:16px;color:#2a2a36">Einingarlýsing</div>
<div class="t" style="left:450px;top:97px;font-size:10.5px;line-height:16px;color:#2a2a36">UBL eining</div>
<div class="t" style="left:516.5px;top:97px;font-size:10.5px;line-height:16px;color:#2a2a36">Erlend eining</div>
<svg class="a" style="left:336px;top:101px" width="8" height="7" viewBox="0 0 8 7">
<path d="M0 0.5 H2 M0 2.5 H4 M0 4.5 H6 M0 6.5 H8" stroke="#888" stroke-width="1"/></svg>
<svg class="a" style="left:273px;top:123px" width="5" height="8" viewBox="0 0 5 8">
<path d="M0.5 0.5 L4.5 4 L0.5 7.5Z" fill="#666"/></svg>
<div class="t" style="left:286px;top:117px;font-size:10.5px;line-height:20px;color:#fff">Ein</div>
<div class="t" style="left:356px;top:117px;font-size:10.5px;line-height:20px;color:#fff">Einingar</div>
<div class="t" style="left:446px;top:117px;font-size:10.5px;line-height:20px;color:#fff">C62</div>
<div class="t" style="left:513px;top:117px;font-size:10.5px;line-height:20px;color:#fff">Unt</div>
<div class="t" style="left:286px;top:135px;font-size:10.5px;line-height:20px;color:#000">Ft</div>
<div class="t" style="left:356px;top:135px;font-size:10.5px;line-height:20px;color:#333">Fet</div>
<div class="t" style="left:446px;top:135px;font-size:10.5px;line-height:20px;color:#333">FOT</div>
<div class="t" style="left:513px;top:135px;font-size:10.5px;line-height:20px;color:#333">Ft</div>
<div class="t" style="left:286px;top:153px;font-size:10.5px;line-height:20px;color:#000">Gal</div>
<div class="t" style="left:356px;top:153px;font-size:10.5px;line-height:20px;color:#333">Gallons</div>
<div class="t" style="left:446px;top:153px;font-size:10.5px;line-height:20px;color:#333">GLI</div>
<div class="t" style="left:513px;top:153px;font-size:10.5px;line-height:20px;color:#333">Gal</div>
<div class="t" style="left:286px;top:171px;font-size:10.5px;line-height:20px;color:#000">Gr</div>
<div class="t" style="left:356px;top:171px;font-size:10.5px;line-height:20px;color:#333">Grömm</div>
<div class="t" style="left:446px;top:171px;font-size:10.5px;line-height:20px;color:#333">GRM</div>
<div class="t" style="left:513px;top:171px;font-size:10.5px;line-height:20px;color:#333">Gr</div>
<div class="t" style="left:286px;top:189px;font-size:10.5px;line-height:20px;color:#000">In</div>
<div class="t" style="left:356px;top:189px;font-size:10.5px;line-height:20px;color:#333">Tommur</div>
<div class="t" style="left:446px;top:189px;font-size:10.5px;line-height:20px;color:#333">INH</div>
<div class="t" style="left:513px;top:189px;font-size:10.5px;line-height:20px;color:#333">In</div>
<div class="t" style="left:286px;top:207px;font-size:10.5px;line-height:20px;color:#000">Kg</div>
<div class="t" style="left:356px;top:207px;font-size:10.5px;line-height:20px;color:#333">Kílógrömm</div>
<div class="t" style="left:446px;top:207px;font-size:10.5px;line-height:20px;color:#333">KGM</div>
<div class="t" style="left:513px;top:207px;font-size:10.5px;line-height:20px;color:#333">Kg</div>
<div class="t" style="left:286px;top:225px;font-size:10.5px;line-height:20px;color:#000">Klst</div>
<div class="t" style="left:356px;top:225px;font-size:10.5px;line-height:20px;color:#333">Klukkustundir</div>
<div class="t" style="left:446px;top:225px;font-size:10.5px;line-height:20px;color:#333">HUR</div>
<div class="t" style="left:513px;top:225px;font-size:10.5px;line-height:20px;color:#333">Hr</div>
<div class="t" style="left:286px;top:243px;font-size:10.5px;line-height:20px;color:#000">Lbs</div>
<div class="t" style="left:356px;top:243px;font-size:10.5px;line-height:20px;color:#333">Pund</div>
<div class="t" style="left:446px;top:243px;font-size:10.5px;line-height:20px;color:#333">LBR</div>
<div class="t" style="left:513px;top:243px;font-size:10.5px;line-height:20px;color:#333">Lbs</div>
<div class="t" style="left:286px;top:261px;font-size:10.5px;line-height:20px;color:#000">Ltr</div>
<div class="t" style="left:356px;top:261px;font-size:10.5px;line-height:20px;color:#333">Lítrar</div>
<div class="t" style="left:446px;top:261px;font-size:10.5px;line-height:20px;color:#333">LTR</div>
<div class="t" style="left:513px;top:261px;font-size:10.5px;line-height:20px;color:#333">Ltr</div>
<div class="t" style="left:286px;top:279px;font-size:10.5px;line-height:20px;color:#000">m</div>
<div class="t" style="left:356px;top:279px;font-size:10.5px;line-height:20px;color:#333">Metrar</div>
<div class="t" style="left:446px;top:279px;font-size:10.5px;line-height:20px;color:#333">MTR</div>
<div class="t" style="left:513px;top:279px;font-size:10.5px;line-height:20px;color:#333">Mtr</div>
<div class="t" style="left:286px;top:297px;font-size:10.5px;line-height:20px;color:#000">mm</div>
<div class="t" style="left:356px;top:297px;font-size:10.5px;line-height:20px;color:#333">Millimetrar</div>
<div class="t" style="left:446px;top:297px;font-size:10.5px;line-height:20px;color:#333">MMT</div>
<div class="t" style="left:513px;top:297px;font-size:10.5px;line-height:20px;color:#333">mm</div>
<div class="t" style="left:286px;top:315px;font-size:10.5px;line-height:20px;color:#000">Mtr</div>
<div class="t" style="left:356px;top:315px;font-size:10.5px;line-height:20px;color:#333">Metrar</div>
<div class="t" style="left:446px;top:315px;font-size:10.5px;line-height:20px;color:#333">MTR</div>
<div class="t" style="left:513px;top:315px;font-size:10.5px;line-height:20px;color:#333">Mtr</div>
<div class="t" style="left:286px;top:333px;font-size:10.5px;line-height:20px;color:#000">Oz</div>
<div class="t" style="left:356px;top:333px;font-size:10.5px;line-height:20px;color:#333">Únsa</div>
<div class="t" style="left:446px;top:333px;font-size:10.5px;line-height:20px;color:#333">ONZ</div>
<div class="t" style="left:513px;top:333px;font-size:10.5px;line-height:20px;color:#333">Oz</div>
<div class="t" style="left:286px;top:351px;font-size:10.5px;line-height:20px;color:#000">Sm</div>
<div class="t" style="left:356px;top:351px;font-size:10.5px;line-height:20px;color:#333">Sentimetrar</div>
<div class="t" style="left:446px;top:351px;font-size:10.5px;line-height:20px;color:#333">CMT</div>
<div class="t" style="left:513px;top:351px;font-size:10.5px;line-height:20px;color:#333">Cm</div>
<div class="t" style="left:286px;top:369px;font-size:10.5px;line-height:20px;color:#000">Stk</div>
<div class="t" style="left:356px;top:369px;font-size:10.5px;line-height:20px;color:#333">Stykki</div>
<div class="t" style="left:446px;top:369px;font-size:10.5px;line-height:20px;color:#333">C62</div>
<div class="t" style="left:513px;top:369px;font-size:10.5px;line-height:20px;color:#333">Pcs</div>
<div class="t" style="left:286px;top:387px;font-size:10.5px;line-height:20px;color:#000">T</div>
<div class="t" style="left:356px;top:387px;font-size:10.5px;line-height:20px;color:#333">Tonn</div>
<div class="t" style="left:446px;top:387px;font-size:10.5px;line-height:20px;color:#333">TNE</div>
<div class="t" style="left:513px;top:387px;font-size:10.5px;line-height:20px;color:#333">T</div>
<div class="a" style="left:751px;top:93px;width:18px;height:328px;background:#ececec;border-left:1px solid #b0b0b0"></div>
<div class="a" style="left:752px;top:92px;width:17px;height:17px;background:#fff;border:1px solid #b0b0b0"></div>
<div class="a" style="left:752px;top:176px;width:17px;height:151px;background:#fff;border:1px solid #b0b0b0"></div>
<div class="a" style="left:752px;top:404px;width:17px;height:17px;background:#fff;border:1px solid #b0b0b0"></div>
<svg class="a" style="left:757px;top:97px" width="7" height="6" viewBox="0 0 7 6"><path d="M0.5 5 L3.5 0.6 L6.5 5Z" fill="#787878"/></svg>
<svg class="a" style="left:757px;top:410px" width="7" height="6" viewBox="0 0 7 6"><path d="M0.5 0 L3.5 4.4 L6.5 0Z" fill="#787878"/></svg>
<div class="a" style="left:267px;top:432px;width:80px;height:22px;background:#fefefe;border:1px solid #adadad"></div>
<svg class="a" style="left:286.4px;top:436px" width="14.1" height="14"><text x="0" y="10.8" textLength="12.1" lengthAdjust="spacingAndGlyphs" font-family="Liberation Serif" font-weight="700" font-size="12.6" fill="#111">F1</text></svg>
<svg class="a" style="left:305.5px;top:436px" width="28.2" height="14"><text x="0" y="10.8" textLength="25.2" lengthAdjust="spacingAndGlyphs" font-family="Liberation Sans" font-size="11" fill="#3c4672">Hjálp</text></svg>
<div class="a" style="left:351px;top:432px;width:80px;height:22px;background:#fefefe;border:1px solid #adadad"></div>
<svg class="a" style="left:362.0px;top:436px" width="15.8" height="14"><text x="0" y="10.8" textLength="13.8" lengthAdjust="spacingAndGlyphs" font-family="Liberation Serif" font-weight="700" font-size="12.6" fill="#111">F5</text></svg>
<svg class="a" style="left:382.4px;top:436px" width="43.1" height="14"><text x="0" y="10.8" textLength="40.1" lengthAdjust="spacingAndGlyphs" font-family="Liberation Sans" font-size="11" fill="#3c4672">Valmynd</text></svg>
<div class="a" style="left:435px;top:432px;width:80px;height:22px;background:#fefefe;border:1px solid #adadad"></div>
<svg class="a" style="left:457.1px;top:436px" width="20.0" height="14"><text x="0" y="10.8" textLength="18.0" lengthAdjust="spacingAndGlyphs" font-family="Liberation Serif" font-weight="700" font-size="12.6" fill="#111">INS</text></svg>
<svg class="a" style="left:478.6px;top:436px" width="17.2" height="14"><text x="0" y="10.8" textLength="14.2" lengthAdjust="spacingAndGlyphs" font-family="Liberation Sans" font-size="11" fill="#3c4672">Ný</text></svg>
<div class="a" style="left:519px;top:432px;width:80px;height:22px;background:#fefefe;border:1px solid #adadad"></div>
<svg class="a" style="left:528.4px;top:436px" width="26.4" height="14"><text x="0" y="10.8" textLength="24.4" lengthAdjust="spacingAndGlyphs" font-family="Liberation Serif" font-weight="700" font-size="12.6" fill="#111">ENT</text></svg>
<svg class="a" style="left:556.7px;top:436px" width="36.0" height="14"><text x="0" y="10.8" textLength="33.0" lengthAdjust="spacingAndGlyphs" font-family="Liberation Sans" font-size="11" fill="#3c4672">Breyta</text></svg>
<div class="a" style="left:603px;top:432px;width:80px;height:22px;background:#fefefe;border:1px solid #adadad"></div>
<svg class="a" style="left:618.7px;top:436px" width="24.4" height="14"><text x="0" y="10.8" textLength="22.4" lengthAdjust="spacingAndGlyphs" font-family="Liberation Serif" font-weight="700" font-size="12.6" fill="#111">DEL</text></svg>
<svg class="a" style="left:645.9px;top:436px" width="25.6" height="14"><text x="0" y="10.8" textLength="22.6" lengthAdjust="spacingAndGlyphs" font-family="Liberation Sans" font-size="11" fill="#3c4672">Fella</text></svg>
<div class="a" style="left:687px;top:432px;width:80px;height:22px;background:#fefefe;border:1px solid #adadad"></div>
<svg class="a" style="left:699.5px;top:436px" width="21.7" height="14"><text x="0" y="10.8" textLength="19.7" lengthAdjust="spacingAndGlyphs" font-family="Liberation Serif" font-weight="700" font-size="12.6" fill="#111">ESC</text></svg>
<svg class="a" style="left:724.6px;top:436px" width="35.0" height="14"><text x="0" y="10.8" textLength="32.0" lengthAdjust="spacingAndGlyphs" font-family="Liberation Sans" font-size="11" fill="#3c4672">Hætta</text></svg>
<div class="a" style="left:260px;top:458px;width:516px;height:20px;background:#f6f6f6;border:1px solid #dcdcdc;border-bottom:2px solid #d0d0d0"></div>
<div class="a" style="left:285px;top:459px;width:1px;height:17px;background:#a8a8a8"></div>
<div class="a" style="left:286px;top:459px;width:1px;height:17px;background:#fff"></div>
<div class="a" style="left:473px;top:459px;width:1px;height:17px;background:#a8a8a8"></div>
<div class="a" style="left:474px;top:459px;width:1px;height:17px;background:#fff"></div>
<div class="a" style="left:621px;top:459px;width:1px;height:17px;background:#a8a8a8"></div>
<div class="a" style="left:622px;top:459px;width:1px;height:17px;background:#fff"></div>
<div class="t" style="left:268px;top:459px;font-size:11px;line-height:19px;color:#333">16</div>
</body></html>
